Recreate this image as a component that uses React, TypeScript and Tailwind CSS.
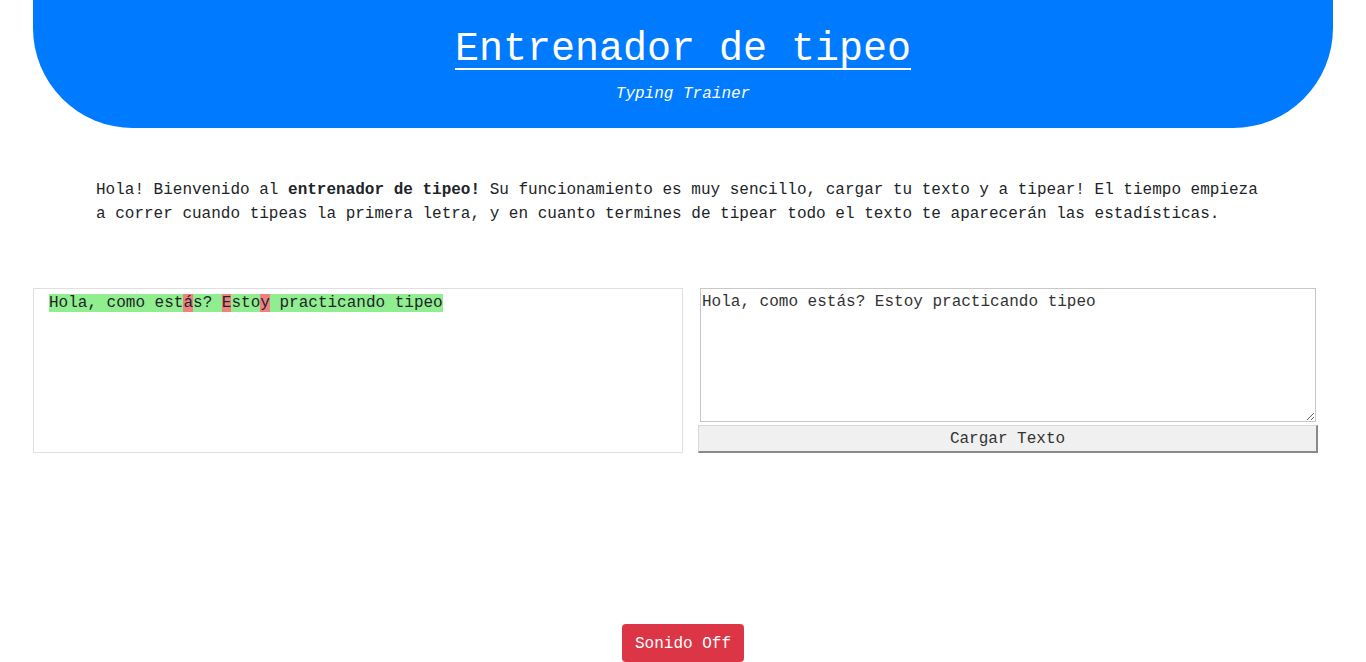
import React from 'react';

const segments: { text: string; ok: boolean }[] = [
  { text: 'Hola, como est', ok: true },
  { text: 'á', ok: false },
  { text: 's? ', ok: true },
  { text: 'E', ok: false },
  { text: 'sto', ok: true },
  { text: 'y', ok: false },
  { text: ' practicando tipeo', ok: true },
];

const App: React.FC = () => {
  return (
    <div className="min-h-screen bg-white font-['Liberation_Mono',monospace] text-[#212529]">
      {/* Header */}
      <header className="mx-[33px] bg-[#007bff] rounded-b-[100px] pt-[26px] pb-[22px] text-center text-white">
        <h1 className="text-[40px] leading-[48px] underline underline-offset-[8px] decoration-2 mb-[8px]">
          Entrenador de tipeo
        </h1>
        <p className="text-[16px] leading-[24px] italic">Typing Trainer</p>
      </header>

      {/* Intro */}
      <p className="px-[96px] mt-[50px] text-[16px] leading-[24px]">
        Hola! Bienvenido al <b>entrenador de tipeo!</b> Su funcionamiento es muy sencillo, cargar tu texto y a tipear! El
        tiempo empieza a correr cuando tipeas la primera letra, y en cuanto termines de tipear todo el texto te aparecerán
        las estadísticas.
      </p>

      {/* Trainer */}
      <div className="flex gap-[15px] ml-[33px] mt-[62px]">
        <div className="w-[650px] h-[165px] border border-[#e0e0e0] px-[15px] pt-[4px] text-[16px] leading-[20px]">
          {segments.map((s, i) => (
            <span key={i} className={s.ok ? 'bg-[#90ee90]' : 'bg-[#f08080]'}>
              {s.text}
            </span>
          ))}
        </div>
        <div className="w-[620px] flex flex-col">
          <textarea
            className="mx-[2px] h-[134px] border border-[#c8c8c8] px-[1px] pt-[2px] text-[16px] leading-[22px] text-[#333] font-['Liberation_Mono',monospace] outline-none"
            defaultValue="Hola, como estás? Estoy practicando tipeo"
          />
          <button className="mt-[3px] h-[28px] bg-[#f0f0f0] border-t border-l border-[#d8d8d8] border-b-2 border-r-2 border-b-[#8a8a8a] border-r-[#8a8a8a] text-[16px] text-[#333] font-['Liberation_Mono',monospace]">
            Cargar Texto
          </button>
        </div>
      </div>

      {/* Sound */}
      <div className="flex justify-center mt-[171px]">
        <button className="h-[38px] px-[13px] pt-[2px] rounded-[4px] bg-[#dc3545] text-white text-[16px] font-['Liberation_Mono',monospace]">
          Sonido Off
        </button>
      </div>
    </div>
  );
};

export default App;
